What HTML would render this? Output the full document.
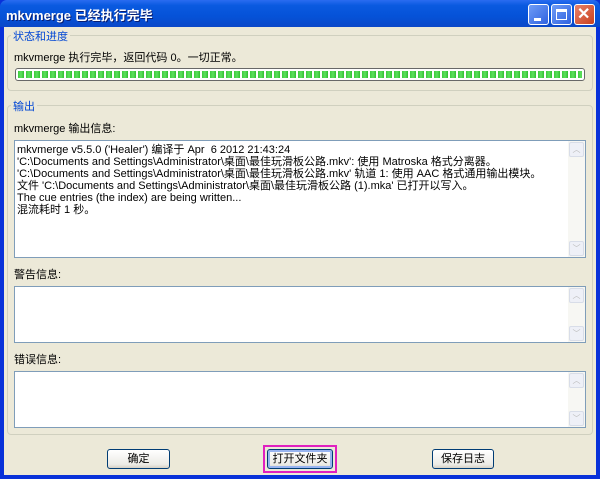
<!DOCTYPE html>
<html><head><meta charset="utf-8"><style>
*{margin:0;padding:0;box-sizing:border-box}
body{width:600px;height:479px;overflow:hidden;background:#0831d9;font-family:"Liberation Sans","Noto Sans CJK SC",sans-serif;font-size:11px;color:#000;position:relative}
.title{position:absolute;left:0;top:0;width:600px;height:27px;background:linear-gradient(#2a6cf0,#0a5ae0 20%,#0552d8 60%,#0a48c8);border-radius:7px 7px 0 0}
.title span{position:absolute;left:6px;top:5px;color:#fff;font-size:13px;font-weight:bold;text-shadow:1px 1px #0a1e70}
.body{position:absolute;left:4px;top:27px;width:592px;height:448px;background:#ece9d8}
.tb{position:absolute;top:4px;width:21px;height:21px;border:1px solid #fff;border-radius:3px;background:linear-gradient(135deg,#6f9cf6,#2f62e0)}
.tb.x{background:linear-gradient(135deg,#e9826a,#c8401e)}
.grp{position:absolute;border:1px solid #d0d0bf;border-radius:4px}
.lbl{position:absolute;color:#0046d5;background:#ece9d8;padding:0 2px;font-size:11px}
.t{position:absolute;font-size:11px;white-space:nowrap}
.ta{position:absolute;background:#fff;border:1px solid #7f9db9}
.sb{position:absolute;right:0;top:0;bottom:0;width:17px;background:#f7f7f3}
.ar{position:absolute;left:1px;width:15px;height:15px;background:#eef0f7;border:1px solid #d8dde8;border-radius:2px;color:#bbb;font-size:8px;text-align:center;line-height:13px}
.btn{position:absolute;height:20px;border:1px solid #003c74;border-radius:3px;background:linear-gradient(#fff,#ecebe6 80%,#d6d0c5);text-align:center;line-height:18px;font-size:11px}
.lines div{height:12px;line-height:12px}
</style></head><body>
<div class="title"><span>mkvmerge 已经执行完毕</span></div>
<div class="tb" style="left:528px"><div style="position:absolute;left:5px;top:13px;width:7px;height:3px;background:#fff"></div></div>
<div class="tb" style="left:551px"><div style="position:absolute;left:4px;top:4px;width:11px;height:11px;border:1px solid #fff;border-top-width:3px"></div></div>
<div class="tb x" style="left:574px"><div style="position:absolute;left:2px;top:-1px;color:#fff;font-size:16px;font-weight:bold">✕</div></div>
<div class="body"></div>
<div class="grp" style="left:7px;top:35px;width:586px;height:56px"></div>
<div class="lbl" style="left:11px;top:28px">状态和进度</div>
<div class="t" style="left:14px;top:49px">mkvmerge 执行完毕，返回代码 0。一切正常。</div>
<div style="position:absolute;left:15px;top:68px;width:570px;height:13px;border:1px solid #686868;border-radius:3px;background:#fff;padding:2px 2px"><div style="height:7px;background:repeating-linear-gradient(90deg,#3ccb3c 0,#5ee05e 3px,#2fbf2f 6px,#fff 6px,#fff 8px)"></div></div>
<div class="grp" style="left:7px;top:105px;width:586px;height:330px"></div>
<div class="lbl" style="left:11px;top:98px">输出</div>
<div class="t" style="left:14px;top:120px">mkvmerge 输出信息:</div>
<div class="ta" style="left:14px;top:140px;width:572px;height:118px"><div class="sb"><div class="ar" style="top:1px">︿</div><div class="ar" style="bottom:1px">﹀</div></div>
<div class="lines" style="position:absolute;left:2px;top:3px;white-space:nowrap;font-size:11px">
<div>mkvmerge v5.5.0 ('Healer') 编译于 Apr&nbsp; 6 2012 21:43:24</div>
<div>'C:\Documents and Settings\Administrator\桌面\最佳玩滑板公路.mkv': 使用 Matroska 格式分离器。</div>
<div>'C:\Documents and Settings\Administrator\桌面\最佳玩滑板公路.mkv' 轨道 1: 使用 AAC 格式通用输出模块。</div>
<div>文件 'C:\Documents and Settings\Administrator\桌面\最佳玩滑板公路 (1).mka' 已打开以写入。</div>
<div>The cue entries (the index) are being written...</div>
<div>混流耗时 1 秒。</div></div></div>
<div class="t" style="left:14px;top:266px">警告信息:</div>
<div class="ta" style="left:14px;top:286px;width:572px;height:57px"><div class="sb"><div class="ar" style="top:1px">︿</div><div class="ar" style="bottom:1px">﹀</div></div></div>
<div class="t" style="left:14px;top:351px">错误信息:</div>
<div class="ta" style="left:14px;top:371px;width:572px;height:57px"><div class="sb"><div class="ar" style="top:1px">︿</div><div class="ar" style="bottom:1px">﹀</div></div></div>
<div class="btn" style="left:107px;top:449px;width:63px">确定</div>
<div style="position:absolute;left:263px;top:445px;width:74px;height:28px;border:2px solid #e020c0"></div>
<div class="btn" style="left:267px;top:449px;width:66px;box-shadow:inset 0 0 0 2px #98b4f0">打开文件夹</div>
<div class="btn" style="left:432px;top:449px;width:62px">保存日志</div>
</body></html>
